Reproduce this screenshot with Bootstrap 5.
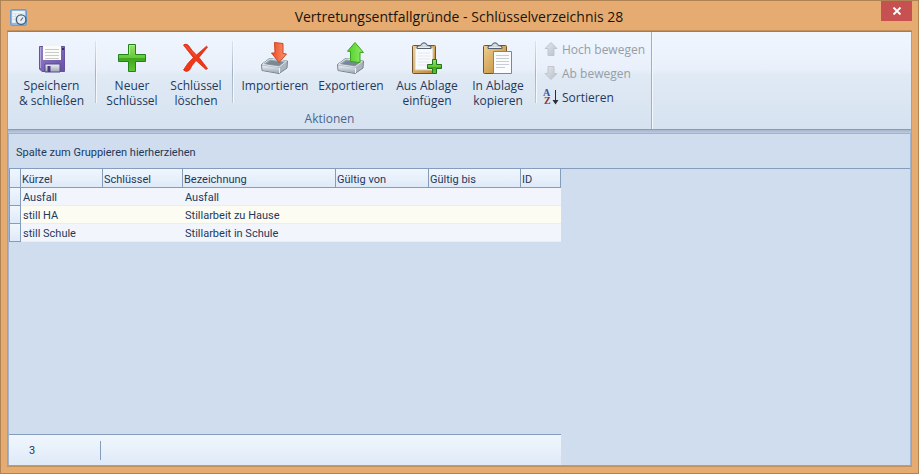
<!DOCTYPE html>
<html lang="de">
<head>
<meta charset="utf-8">
<meta name="viewport" content="width=device-width, initial-scale=1">
<title>Vertretungsentfallgründe - Schlüsselverzeichnis 28</title>
<link href="https://cdn.jsdelivr.net/npm/bootstrap@5.3.0/dist/css/bootstrap.min.css" rel="stylesheet">
<style>
  :root { --ink: #1e395b; --line: #849dbd; --line-soft: #a0b4d0; --panel: #cfddee; }
  body { font-family: "Open Sans", "Noto Sans", sans-serif; font-size: 12px; line-height: 15px; color: var(--ink); }
  .win { background: #e5ab70; border: 1px solid #b08355; padding: 0 6px 6px; }
  .titlebar { height: 29px; }
  .titlebar h1 { font: 14px/20px "Open Sans", "Noto Sans", sans-serif; color: #1c140c; padding: 6px 0 0 10px; }
  .app-icon { margin: 8px 0 0 3px; width: 17px; height: 17px; }
  .close-btn { width: 31px; height: 20px; background: #c75050; border: 0; padding: 0; }
  .client { border: solid #c4905c; border-width: 1px 0; min-height: 0; }
  .frame { border: 1px solid #8ba6c4; border-top-color: #76859a; min-height: 0; }
  .ribbon { height: 98px; background: linear-gradient(#eff6fe 0, #e9f0fb 38%, #e0eaf5 44%, #d6e2f0 100%); border-bottom: 1px solid var(--line); }
  .ribbon-group { border-right: 1px solid #9cb0c9; box-shadow: 1px 0 #f3f8fd; padding-top: 5px; }
  .tool { border: 0; background: none; padding: 5px 0 0; color: var(--ink); white-space: nowrap; }
  .tool svg { display: block; margin: 0 auto 4px; width: 32px; height: 32px; }
  .w-save { width: 87px; } .w-key { width: 64px; } .w-io { width: 76px; } .w-copy { width: 66px; }
  .rule { width: 1px; height: 62px; margin-top: 4px; background: linear-gradient(#dbe5f1, #a3b2c9 50%, #b9c6d8); box-shadow: 1px 0 #f4f8fd; }
  .small-tools { padding: 0 6px 0 7px; }
  .small-tool { border: 0; background: none; padding: 0; height: 24px; gap: 3px; color: var(--ink); white-space: nowrap; }
  .small-tool:disabled { color: #989da5; }
  .small-tool svg { width: 16px; height: 16px; overflow: visible; }
  .caption { color: #4c648a; padding-bottom: 3px; }
  .strip { height: 3px; background: linear-gradient(#a4b6cd, #bccbdf); }
  .grid-area { background: var(--panel); border: solid var(--line-soft); border-width: 1px 1px 0; font: 11px/16px Roboto, sans-serif; min-height: 0; }
  .group-box { height: 35px; padding: 11px 7px 0; border-bottom: 1px solid var(--line); }
  .keys { width: 552px; table-layout: fixed; border-collapse: separate; border-spacing: 0; }
  .keys th, .keys td { height: 18px; padding: 2px 2px 0; line-height: 15px; font-weight: 400; white-space: nowrap; }
  .keys thead th { height: 19px; padding: 3px 1px 0; line-height: 15px; background: linear-gradient(#f0f6fd, #dfeaf8); border-right: 1px solid var(--line); border-bottom: 1px solid var(--line); }
  .keys tbody th { background: linear-gradient(#f0f6fd, #dfeaf8); border: 1px solid var(--line); border-width: 0 1px 1px 0; }
  .keys tr > :first-child { border-left: 1px solid var(--line); }
  .keys tbody td { background: #f2f5fb; border-bottom: 1px solid #ecedf0; }
  .keys tbody tr:nth-child(2) td { background: #fdfcf3; }
  .foot { width: 552px; height: 31px; background: linear-gradient(#f0f6fd, #dfeaf8); border-top: 1px solid var(--line); }
  .count { width: 92px; height: 19px; padding-left: 20px; border-right: 1px solid var(--line); line-height: 20px; }
</style>
</head>
<body>
<svg class="position-absolute" width="0" height="0" aria-hidden="true">
  <defs>
    <linearGradient id="green" x2="0" y2="1"><stop stop-color="#9be36a"/><stop offset=".5" stop-color="#62c837"/><stop offset=".52" stop-color="#3fa51f"/><stop offset="1" stop-color="#5fc832"/></linearGradient>
    <linearGradient id="purple" x2="1" y2="1"><stop stop-color="#9380c8"/><stop offset="1" stop-color="#6650a4"/></linearGradient>
    <linearGradient id="wood" x2="1" y2="1"><stop stop-color="#f0cf91"/><stop offset="1" stop-color="#bd852d"/></linearGradient>
    <linearGradient id="steel" x2="0" y2="1"><stop stop-color="#eef2f5"/><stop offset="1" stop-color="#9aa6b0"/></linearGradient>
    <linearGradient id="orange" x2="1" y2="0"><stop stop-color="#f1471f"/><stop offset="1" stop-color="#f69a74"/></linearGradient>
    <linearGradient id="lime" x2="1" y2="0"><stop stop-color="#4bcf25"/><stop offset="1" stop-color="#96ec6a"/></linearGradient>
    <linearGradient id="gray" x2="1" y2="1"><stop stop-color="#e4e7ec"/><stop offset="1" stop-color="#b9bfc9"/></linearGradient>
    <g id="tray">
      <path d="M2.500 22.500 10.500 16.500 28.500 19 28 26 20 31.500 3 28.500Z" fill="#aab5bf" stroke="#76838e"/>
      <path d="M3.500 22.300 11 17 27.500 19.300 20 25Z" fill="#95a4b0" stroke="#dfe5ea"/>
      <path d="M7 22 11.500 18.700 24.500 20.500 20 23.800Z" fill="#788895"/>
      <path d="M3.200 23.500 20 26V31L3.500 28.200Z" fill="url(#steel)"/><path d="M20.500 26V31" stroke="#f1f4f6" fill="none"/>
    </g>
    <g id="clip">
      <rect x="4.500" y="3.500" width="23" height="28" rx="1" fill="url(#wood)" stroke="#735329"/>
    </g>
    <g id="clamp"><path d="M9 6.500V4.500L12.500 3.500Q13.500 .8 16 .8T19.500 3.500L23 4.500V6.500Z" fill="#b9c4cd" stroke="#55606b"/><path d="M14.500 3h3M10 5.200h12" stroke="#fff"/></g>
  </defs>
</svg>

<main class="win vh-100 d-flex flex-column overflow-hidden">
  <header class="titlebar d-flex flex-shrink-0 align-items-start">
    <svg class="app-icon" viewBox="0 0 16 16" aria-hidden="true">
      <rect x=".5" y=".5" width="15" height="15" rx="2" fill="#8fb8e2" stroke="#6c9ccd"/>
      <path d="M2 2h12v11H2Z" fill="#f4f7fa"/><path d="M2 4.500h12M2 7h9M2 9.500h9M5 4v9M8 4v9" stroke="#d7dfe6"/>
      <circle cx="10.500" cy="10" r="4.500" fill="#e6eef4" stroke="#455d76" stroke-width="1.300"/><path d="M10 11 12.300 8" stroke="#526d88"/>
    </svg>
    <h1 class="flex-grow-1 text-center m-0">Vertretungsentfallgründe - Schlüsselverzeichnis 28</h1>
    <button class="close-btn" type="button" aria-label="Schließen">
      <svg class="d-block mx-auto" width="10" height="8" viewBox="0 0 10 8" aria-hidden="true"><path d="M1.500.5 8.500 7.500M8.500.5 1.500 7.500" stroke="#fff" stroke-width="1.900"/></svg>
    </button>
  </header>

  <div class="client flex-grow-1 d-flex flex-column">
  <div class="frame flex-grow-1 d-flex flex-column">
    <div class="ribbon d-flex flex-shrink-0" role="toolbar" aria-label="Aktionen">
      <div class="ribbon-group d-flex flex-column">
        <div class="d-flex align-items-start flex-grow-1">
          <button class="tool w-save" type="button">
            <svg viewBox="0 0 32 32" aria-hidden="true">
              <path d="M3.500 4.500H28.500V29.500H6L3.500 27Z" fill="url(#purple)" stroke="#6551a0"/><path d="M4.500 5v21" stroke="#b4a4dd"/>
              <path d="M7 4h18v14H7Z" fill="#fbfbfa"/><path d="M9 7.500h14M9 10.500h14M9 13.500h14M9 16.500h14" stroke="#cbcac6"/>
              <path d="M26 6h2v2h-2Z" fill="#3c2a6a"/><path d="M9 22h15v8H9Z" fill="url(#steel)" stroke="#5b4692"/><path d="M11.500 24h3v6h-3Z" fill="#4d3a80"/>
            </svg>
            Speichern<br>&amp; schließen
          </button>
          <div class="rule"></div>
          <div class="d-flex align-items-start ps-1 pe-1">
            <button class="tool w-key" type="button">
              <svg viewBox="0 0 32 32" aria-hidden="true"><path d="M12.500 2.500H19.500V12.500H29.500V19.500H19.500V29.500H12.500V19.500H2.500V12.500H12.500Z" fill="url(#green)" stroke="#23821b"/><path d="M13.500 12.500v-9h5" fill="none" stroke="#b6eb92"/></svg>
              Neuer<br>Schlüssel
            </button>
            <button class="tool w-key" type="button">
              <svg viewBox="0 0 32 32" aria-hidden="true"><path d="M3.500 3Q6 1 8.500 3.500Q12 9 16.500 13L26.500 4.200 27.500 5 19 15.500 27.500 26.500 26 27.500 16 18.500Q12 23 9.500 28Q6.500 31 3.500 28Q8 20 13.500 15.700 8 9 3.500 3Z" fill="#ee3818" stroke="#d92a11" stroke-width=".8"/><path d="M5.500 3.500 16 14.500" stroke="#f9603a" fill="none"/></svg>
              Schlüssel<br>löschen
            </button>
          </div>
          <div class="rule"></div>
          <div class="d-flex align-items-start ps-1 pe-1">
            <button class="tool w-io" type="button">
              <svg viewBox="0 0 32 32" aria-hidden="true"><use href="#tray"/><path d="M15.500 .5 24 1.500V11.500L27.500 12 20 20.500 12.500 11 16 11Z" fill="url(#orange)" stroke="#c8482a"/></svg>
              Importieren
            </button>
            <button class="tool w-io" type="button">
              <svg viewBox="0 0 32 32" aria-hidden="true"><use href="#tray"/><path d="M20 .5 28.500 10.500 25 10.300V20.500L15.500 19.500V9.500L12.500 9.200Z" fill="url(#lime)" stroke="#35a51b"/></svg>
              Exportieren
            </button>
            <button class="tool w-io" type="button">
              <svg viewBox="0 0 32 32" aria-hidden="true"><g transform="translate(-3)"><use href="#clip"/><path d="M7 6h18v22H7Z" fill="#f8fafd" stroke="#d6c9ae"/><path d="M10 11h12M10 14h12M10 17h12M10 20h12M10 23h9" stroke="#e3e8ee"/><use href="#clamp"/></g><path d="M21.500 17.500h4v5h5v4h-5v5h-4v-5h-5v-4h5Z" fill="url(#green)" stroke="#23721b"/></svg>
              Aus Ablage<br>einfügen
            </button>
            <button class="tool w-copy" type="button">
              <svg viewBox="0 0 32 32" aria-hidden="true"><g transform="translate(-3)"><use href="#clip"/><use href="#clamp"/></g><path d="M11.500 9.500H29.500V31.500H11.500Z" fill="#fafcfe" stroke="#7d8790"/><path d="M14 13.500h13M14 16.500h13M14 19.500h13M14 22.500h13M14 25.500h9" stroke="#c6cdd5"/></svg>
              In Ablage<br>kopieren
            </button>
          </div>
          <div class="rule"></div>
          <div class="small-tools d-flex flex-column">
            <button class="small-tool d-flex align-items-center" type="button" disabled>
              <svg viewBox="0 0 16 16" aria-hidden="true"><path d="M8 1.500 14 7.500H11V14.500H5V7.500H2Z" fill="url(#gray)" stroke="#c0c5ce"/></svg>Hoch bewegen
            </button>
            <button class="small-tool d-flex align-items-center" type="button" disabled>
              <svg viewBox="0 0 16 16" aria-hidden="true"><path d="M8 14.500 14 8.500H11V1.500H5V8.500H2Z" fill="url(#gray)" stroke="#c0c5ce"/></svg>Ab bewegen
            </button>
            <button class="small-tool d-flex align-items-center" type="button">
              <svg viewBox="0 0 16 16" aria-hidden="true"><g font-family="Liberation Serif, serif" font-weight="700" font-size="10"><text x="0" y="7" fill="#35539c">A</text><text x="1" y="15" fill="#8e3434">Z</text></g><path d="M12.500 1v12" stroke="#2c2f36"/><path d="M9.500 11h6L12.500 15.500Z" fill="#2c2f36"/></svg>Sortieren
            </button>
          </div>
        </div>
        <div class="caption text-center">Aktionen</div>
      </div>
    </div>
    <div class="strip flex-shrink-0"></div>

    <section class="grid-area flex-grow-1 d-flex flex-column">
      <div class="group-box flex-shrink-0">Spalte zum Gruppieren hierherziehen</div>
      <div class="flex-grow-1">
        <table class="keys">
          <colgroup><col style="width:12px"><col style="width:82px"><col style="width:80px"><col style="width:153px"><col style="width:93px"><col style="width:92px"><col style="width:40px"></colgroup>
          <thead><tr><th></th><th scope="col">Kürzel</th><th scope="col">Schlüssel</th><th scope="col">Bezeichnung</th><th scope="col">Gültig von</th><th scope="col">Gültig bis</th><th scope="col">ID</th></tr></thead>
          <tbody>
            <tr><th></th><td>Ausfall</td><td></td><td>Ausfall</td><td></td><td></td><td></td></tr>
            <tr><th></th><td>still HA</td><td></td><td>Stillarbeit zu Hause</td><td></td><td></td><td></td></tr>
            <tr><th></th><td>still Schule</td><td></td><td>Stillarbeit in Schule</td><td></td><td></td><td></td></tr>
          </tbody>
        </table>
      </div>
      <footer class="foot d-flex align-items-center flex-shrink-0"><div class="count">3</div></footer>
    </section>
  </div>
  </div>
</main>
<script src="https://cdn.jsdelivr.net/npm/bootstrap@5.3.0/dist/js/bootstrap.bundle.min.js"></script>
</body>
</html>
